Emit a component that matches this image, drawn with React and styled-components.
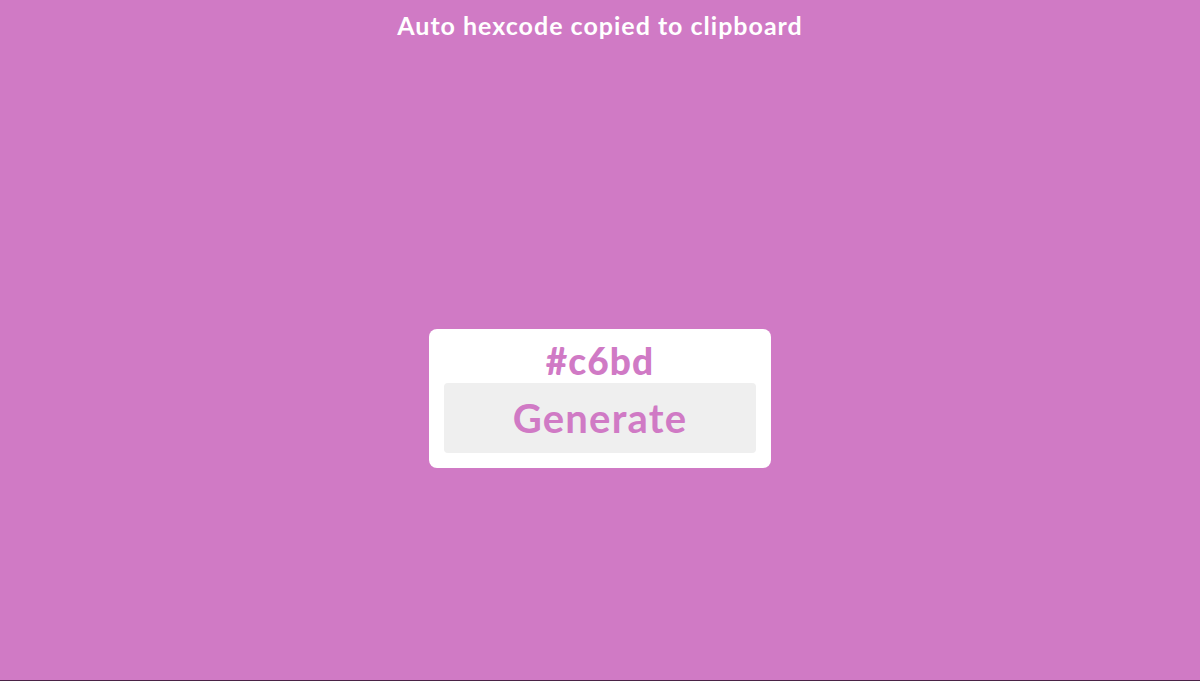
import { useState } from "react"
import styled, { createGlobalStyle } from "styled-components"

const GlobalStyle = createGlobalStyle`
    html, body {
        margin: 0;
        padding: 0;
    }
    body {
        font-family: "Lato", "Noto Sans", sans-serif;
    }
`

export default function App() {
    const [hex] = useState("#c6bd")

    return (
        <Page>
            <GlobalStyle />
            <Title>Auto hexcode copied to clipboard</Title>
            <Main>
                <Card>
                    <HexCode>{hex}</HexCode>
                    <GenerateButton>Generate</GenerateButton>
                </Card>
            </Main>
        </Page>
    )
}

const Page = styled.div`
    background-color: #d07ac5;
    width: 100vw;
    height: 681px;
    display: flex;
    flex-direction: column;
    align-items: center;
    box-sizing: border-box;
    border-bottom: 1px solid #4a2346;
`
const Title = styled.h1`
    margin: 9px 0 0 0;
    color: #fff;
    font-size: 25px;
    font-weight: 700;
    line-height: 32px;
    letter-spacing: .04em;
`
const Main = styled.main`
    flex: 1;
    display: flex;
    justify-content: center;
    align-items: flex-start;
    padding-top: 288px;
`
const Card = styled.div`
    background-color: #fff;
    width: 342px;
    height: 139px;
    border-radius: 8px;
    padding: 10px 15px 15px 15px;
    box-sizing: border-box;
    display: flex;
    flex-direction: column;
    align-items: center;
`
const HexCode = styled.div`
    color: #d07ac5;
    font-size: 37px;
    font-weight: 900;
    line-height: 44px;
    letter-spacing: .03em;
`
const GenerateButton = styled.button`
    width: 100%;
    height: 70px;
    background-color: #efefef;
    border: none;
    border-radius: 4px;
    color: #d07ac5;
    font-family: "Lato", "Noto Sans", sans-serif;
    font-size: 40px;
    font-weight: 700;
    letter-spacing: .03em;
    cursor: pointer;
`
